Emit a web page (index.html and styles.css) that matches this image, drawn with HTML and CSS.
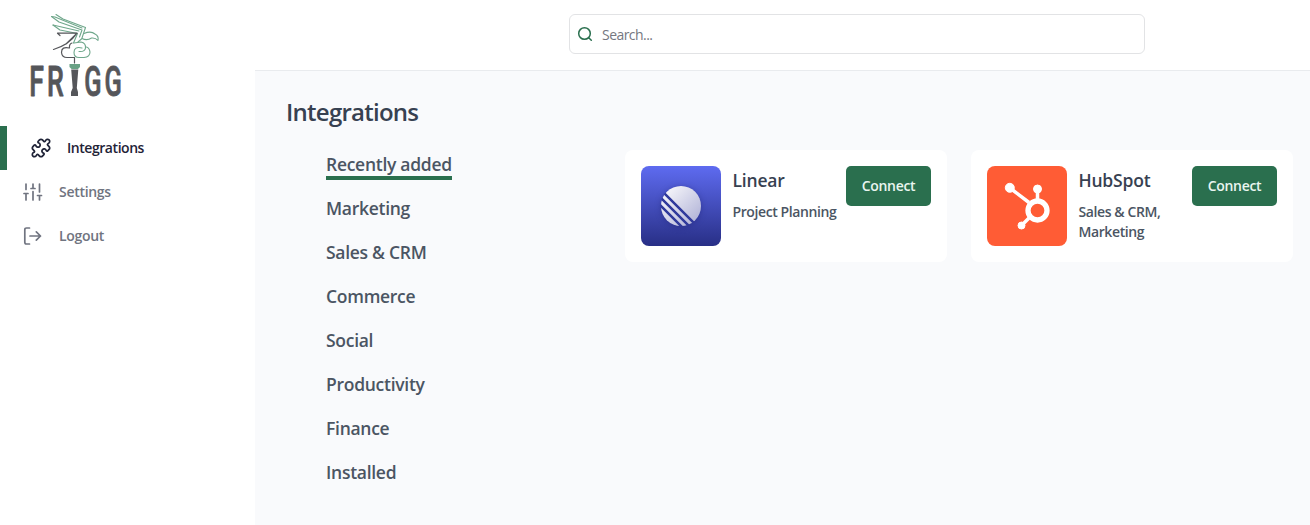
FILE: index.html
```html
<!DOCTYPE html>
<html lang="en">
<head>
<meta charset="utf-8">
<title>Frigg</title>
<link rel="stylesheet" href="styles.css">
</head>
<body>
<div class="app">
  <aside class="sidebar">
    <svg class="logo" viewBox="20 5 115 105" fill="none" stroke-linecap="round" stroke-linejoin="round">
      <g stroke="#6fa78b" stroke-width="1.100">
        <path d="M56 14.500 L63 19 L85.500 27.500 L82 38"/>
        <path d="M51.500 16.500 L59 22 L82 30 L79.500 37"/>
        <path d="M51.500 16.500 L55 17 L82 28"/>
        <path d="M53 25 L60 30 L77.500 33.500 L73.500 43"/>
        <path d="M53 25 L79 31"/>
        <path d="M84 33.500 Q91 30.500 95 34 Q99 36 98 40.500 Q95.500 37.500 91.500 38 Q87 41 82 38.500 L78 42"/>
        <path d="M74 43 L81 42 Q86 43 85.500 48 Q85 52 79 51.500"/>
        <path d="M82 48 Q74 46 74 52.500 Q74 57.500 79 57.500 H84 Q90 57 90 52 Q89.500 48 86.500 47"/>
      </g>
      <g stroke="#55565a" stroke-width="1.200">
        <path d="M60 35.500 L57.500 33.200 H77 Q69 45 53.500 49.500 M77 33.200 L66 44"/>
        <path d="M72 43 Q69 44 69.500 48 Q61.500 46 61.500 52.500 Q62 57.500 67 57.500 H74.500 V63"/>
      </g>
      <g class="wordmark">
        <text transform="translate(29.200 96) scale(.62 1)">FR</text>
        <text transform="translate(84.300 96) scale(.59 1)">GG</text>
      </g>
      <path fill="#69a185" d="M69.500 64 H80 V67 L78 69 H71.500 L69.500 67 Z"/>
      <path fill="#55565a" d="M71.200 69.500 H78.300 L76.800 88 L78 92 V96 H71 V92 L72.700 88 Z"/>
    </svg>
    <nav class="nav">
      <a class="nav-item active">
        <svg class="nav-icon puzzle" viewBox=".5 .5 23 23"><path d="M19.439 7.850c-.049.322.059.648.289.878l1.568 1.568c.47.47.706 1.087.706 1.704s-.235 1.233-.706 1.704l-1.611 1.611a.98.98 0 0 1-.837.276c-.47-.07-.802-.48-.968-.925a2.501 2.501 0 1 0-3.214 3.214c.446.166.855.497.925.968a.979.979 0 0 1-.276.837l-1.610 1.610a2.404 2.404 0 0 1-1.705.707 2.402 2.402 0 0 1-1.704-.706l-1.568-1.568a1.026 1.026 0 0 0-.877-.290c-.493.074-.840.504-1.020.968a2.500 2.500 0 1 1-3.237-3.237c.464-.180.894-.527.967-1.020a1.026 1.026 0 0 0-.289-.877l-1.568-1.568A2.402 2.402 0 0 1 1.998 12c0-.617.236-1.234.706-1.704L4.230 8.770c.240-.240.581-.353.917-.303.515.077.877.528 1.073 1.010a2.500 2.500 0 1 0 3.259-3.259c-.482-.196-.933-.558-1.010-1.073-.050-.336.062-.676.303-.917l1.525-1.525A2.402 2.402 0 0 1 12 1.998c.617 0 1.234.236 1.704.706l1.568 1.568c.230.230.556.338.877.290.493-.074.840-.504 1.020-.968a2.500 2.500 0 1 1 3.237 3.237c-.464.180-.894.527-.967 1.020Z"/></svg>
        <span>Integrations</span>
      </a>
      <a class="nav-item">
        <svg class="nav-icon" viewBox="0 0 20 20"><path d="M3 2V7.500M3 11.500V18M10 2V6.500M10 9.500V18M16.500 2V10M16.500 13.500V18M1 11.500H5M8 6.500H12M14.500 13.500H18.500"/></svg>
        <span>Settings</span>
      </a>
      <a class="nav-item">
        <svg class="nav-icon" viewBox="0 0 20 20"><path d="M6.500 2H3.500Q1.800 2 1.800 3.700V16.300Q1.800 18 3.500 18H6.500M7 10H17.500M13.300 5.800L17.500 10L13.300 14.200"/></svg>
        <span>Logout</span>
      </a>
    </nav>
  </aside>
  <div class="content">
    <header class="topbar">
      <label class="search">
        <svg class="search-icon" viewBox="0 0 16 16"><circle cx="7.500" cy="7.500" r="5.800"/><path d="M11.700 11.700L14.300 14.300"/></svg>
        <input type="text" placeholder="Search...">
      </label>
    </header>
    <main class="main">
      <h1 class="title">Integrations</h1>
      <div class="columns">
        <ul class="categories">
          <li><span class="selected">Recently added</span></li>
          <li><span>Marketing</span></li>
          <li><span>Sales &amp; CRM</span></li>
          <li><span>Commerce</span></li>
          <li><span>Social</span></li>
          <li><span>Productivity</span></li>
          <li><span>Finance</span></li>
          <li><span>Installed</span></li>
        </ul>
        <div class="cards">
          <article class="card">
            <svg class="app-icon" viewBox="0 0 80 80">
              <defs>
                <linearGradient id="blue" x2="0" y2="1"><stop stop-color="#5e6bf0"/><stop offset="1" stop-color="#282f86"/></linearGradient>
                <linearGradient id="silver" x2="1" y2="1"><stop stop-color="#fff"/><stop offset="1" stop-color="#a9abd3"/></linearGradient>
                <clipPath id="disc"><circle cx="40" cy="40" r="20.500"/></clipPath>
              </defs>
              <rect width="80" height="80" fill="url(#blue)"/>
              <circle class="glow" cx="40" cy="41" r="20"/>
              <circle cx="40" cy="40" r="20" fill="url(#silver)"/>
              <path clip-path="url(#disc)" stroke="#303a9c" stroke-width="2.500" d="M18 22L60 64M15 27L57 69M12 32L54 74"/>
            </svg>
            <div class="info"><h2>Linear</h2><p>Project Planning</p></div>
            <button class="connect">Connect</button>
          </article>
          <article class="card">
            <svg class="app-icon" viewBox="0 0 80 80">
              <rect width="80" height="80" fill="#ff5c35"/>
              <g fill="#fff" stroke="#fff"><circle cx="22.800" cy="21.800" r="4.500"/><circle cx="50.500" cy="23" r="4"/><circle cx="34.500" cy="59.500" r="3.500"/>
              <path stroke-width="3.500" d="M23 22L42 36.500M50.500 23V35M35 59L42 52"/></g>
              <circle cx="50.500" cy="44.500" r="9.500" fill="none" stroke="#fff" stroke-width="5.300"/>
            </svg>
            <div class="info"><h2>HubSpot</h2><p>Sales &amp; CRM, Marketing</p></div>
            <button class="connect">Connect</button>
          </article>
        </div>
      </div>
    </main>
  </div>
</div>
</body>
</html>
```
FILE: styles.css
```css
* { box-sizing: border-box; margin: 0; padding: 0; }
body { font-family: "Open Sans", "Noto Sans", sans-serif; background: #fff; }
.app { display: flex; height: 525px; overflow: hidden; }
.sidebar { width: 255px; flex: none; padding-top: 5px; }
.logo { display: block; width: 115px; height: 105px; margin: 0 0 16px 20px; }
.wordmark { font: 500 43px Roboto, sans-serif; letter-spacing: 5px; fill: #55565a; stroke: #55565a; stroke-width: .9px; }
.nav-item { display: flex; align-items: center; height: 44px; padding-left: 23px; gap: 16px; font-size: 14px; font-weight: 600; letter-spacing: -.3px; color: #707480; }
.nav-item.active { border-left: 7px solid #2a6f4e; padding-left: 24px; color: #1f2337; letter-spacing: -.45px; }
.nav-item span { line-height: 20px; }
.nav-icon { width: 20px; height: 20px; fill: none; stroke: currentColor; stroke-width: 1.7; stroke-linecap: round; stroke-linejoin: round; }
.puzzle { stroke-width: 2; }
.content { flex: 1; display: flex; flex-direction: column; }
.topbar { height: 71px; padding: 14px 0 0 314px; border-bottom: 1px solid #e9ebee; }
.search { width: 576px; height: 40px; border: 1px solid #e2e3e5; border-radius: 6px; display: flex; align-items: center; padding-left: 7px; gap: 9px; }
.search-icon { width: 16px; height: 16px; fill: none; stroke: #2a6f4e; stroke-width: 1.5; stroke-linecap: round; }
.search input { border: 0; outline: 0; background: none; font: 14px "Open Sans", sans-serif; letter-spacing: -.55px; }
.search input::placeholder { color: #757780; }
.main { flex: 1; background: #f9fafc; padding: 24px 17px 0 31px; }
.title { font-size: 24px; line-height: 34px; font-weight: 600; letter-spacing: -.75px; color: #374151; }
.columns { display: flex; margin-top: 21px; }
.categories { width: 339px; flex: none; padding-left: 40px; list-style: none; font-size: 17.5px; font-weight: 600; letter-spacing: -.28px; color: #4b5563; }
.categories li { height: 44px; }
.categories span { display: inline-block; height: 30px; line-height: 28px; }
.categories .selected { border-bottom: 4px solid #2a6f4e; }
.cards { flex: 1; display: grid; grid-template-columns: 1fr 1fr; gap: 24px; align-items: start; }
.card { height: 112px; padding: 16px; display: flex; align-items: flex-start; background: #fff; border-radius: 8px; }
.app-icon { width: 80px; height: 80px; flex: none; border-radius: 8px; margin-right: 11.5px; }
.glow { fill: #20267a; opacity: .5; filter: blur(3px); }
.info { flex: 1; min-width: 0; }
.info h2 { font-size: 17.5px; line-height: 29px; font-weight: 600; letter-spacing: -.2px; color: #374151; }
.info p { font-size: 14px; line-height: 20px; font-weight: 600; letter-spacing: -.4px; color: #4b5563; margin-top: 7px; }
.connect { width: 85px; height: 40px; flex: none; border: 0; border-radius: 5px; background: #2a6f4e; color: #e9f5ef; font: 600 14px "Open Sans", sans-serif; letter-spacing: -.3px; padding-bottom: 2px; }
```
